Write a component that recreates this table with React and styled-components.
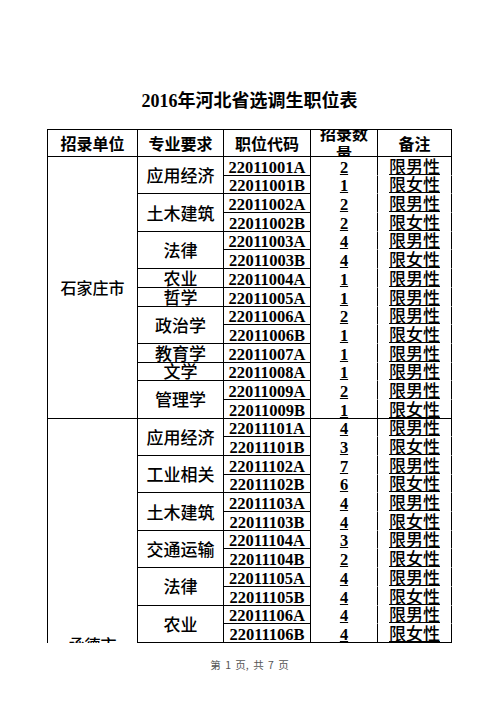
import React from 'react'
import styled, { createGlobalStyle } from 'styled-components'

const GlobalStyle = createGlobalStyle`
  html, body {
    margin: 0;
    padding: 0;
    background: #fff;
  }
  body {
    color: #000;
    font-family: "Noto Sans CJK SC", sans-serif;
  }
`

const ROW_H = 18.7

const Page = styled.div`
  width: 496px;
  height: 702px;
  box-sizing: border-box;
  padding: 90px 0 0 47px;
  display: flex;
  flex-direction: column;
  overflow: hidden;
`

const Title = styled.h1`
  margin: 0;
  width: 405px;
  text-align: center;
  font: 700 18px/22px "Liberation Serif", "Noto Sans CJK SC", serif;
`

const Sheet = styled.div`
  margin-top: 17px;
  display: grid;
  grid-template-columns: 90px 86px 87px 67px 74px;
  grid-template-rows: 27px repeat(26, ${ROW_H}px);
  width: max-content;
  border-top: 1px solid #000;
  border-left: 1px solid #000;
`

const Cell = styled.div`
  min-width: 0;
  display: flex;
  justify-content: center;
  overflow: hidden;
  border-right: 1px solid #000;
  border-bottom: 1px solid #000;
  white-space: nowrap;
`

const HeadCell = styled(Cell)`
  align-items: center;
  font: 700 16px/20px "Noto Sans CJK SC", sans-serif;
`

const QtyHead = styled(HeadCell)`
  padding: 0 4px;
  white-space: normal;
  text-align: center;
`

const CityCell = styled(Cell)`
  grid-column: 1;
  grid-row: ${p => p.$row} / span ${p => p.$span};
  align-items: ${p => (p.$open ? 'flex-start' : 'center')};
  border-bottom: ${p => (p.$open ? 'none' : '1px solid #000')};
  font: 500 16px/18px "Noto Sans CJK SC", sans-serif;
`

const CityName = styled.span`
  flex: none;
  display: flex;
  align-items: center;
  height: ${p => (p.$reach ? `${p.$reach}px` : 'auto')};
`

const MajorCell = styled(Cell)`
  grid-column: 2;
  grid-row: ${p => p.$row} / span ${p => p.$span};
  align-items: ${p => (p.$single ? 'flex-end' : 'center')};
  padding-bottom: ${p => (p.$single ? '1px' : '0')};
  font: 500 17px/16px "Noto Sans CJK SC", sans-serif;
`

const CodeCell = styled(Cell)`
  grid-column: 3;
  grid-row: ${p => p.$row};
  align-items: flex-end;
  font: 700 16.5px/14px "Liberation Serif", serif;
`

const CountCell = styled(Cell)`
  grid-column: 4;
  grid-row: ${p => p.$row};
  align-items: flex-end;
  border-bottom-color: ${p => (p.$edge ? '#000' : 'transparent')};
  font: 700 16.5px/14px "Liberation Serif", serif;
`

const NoteCell = styled(Cell)`
  grid-column: 5;
  grid-row: ${p => p.$row};
  align-items: flex-end;
  border-bottom-color: ${p => (p.$edge ? '#000' : 'transparent')};
  font: 500 17px/14px "Liberation Serif", "Noto Sans CJK SC", sans-serif;
`

const Marked = styled.span`
  text-decoration: underline;
  text-decoration-thickness: 1px;
  text-underline-offset: 1px;
`

const Footer = styled.div`
  width: 405px;
  margin-top: 15px;
  text-align: center;
  font: 400 10.5px/14px "Noto Sans CJK SC", sans-serif;
  color: #555;
  word-spacing: 2px;
`

// [专业, 编号前缀, A人数, B人数]
const groups = [
  {
    city: '石家庄市',
    majors: [
      ['应用经济', '22011001', 2, 1],
      ['土木建筑', '22011002', 2, 2],
      ['法律', '22011003', 4, 4],
      ['农业', '22011004', 1],
      ['哲学', '22011005', 1],
      ['政治学', '22011006', 2, 1],
      ['教育学', '22011007', 1],
      ['文学', '22011008', 1],
      ['管理学', '22011009', 2, 1]
    ]
  },
  {
    city: '承德市',
    open: true,
    majors: [
      ['应用经济', '22011101', 4, 3],
      ['工业相关', '22011102', 7, 6],
      ['土木建筑', '22011103', 4, 4],
      ['交通运输', '22011104', 3, 2],
      ['法律', '22011105', 4, 4],
      ['农业', '22011106', 4, 4]
    ]
  }
]

function buildCells () {
  const cells = []
  let row = 2
  groups.forEach((g, gi) => {
    const groupStart = row
    const span = g.majors.reduce((n, m) => n + (m.length > 3 ? 2 : 1), 0)
    cells.push(
      <CityCell key={'c' + gi} $row={groupStart} $span={span} $open={g.open}>
        <CityName $reach={g.open ? 450 : 0}>{g.city}</CityName>
      </CityCell>
    )
    g.majors.forEach(([name, code, a, b]) => {
      const lines = [[code + 'A', a, '限男性']]
      if (b !== undefined) lines.push([code + 'B', b, '限女性'])
      cells.push(
        <MajorCell key={code} $row={row} $span={lines.length} $single={lines.length === 1}>
          {name}
        </MajorCell>
      )
      lines.forEach(([id, count, note]) => {
        const edge = row === groupStart + span - 1
        cells.push(<CodeCell key={id} $row={row}>{id}</CodeCell>)
        cells.push(
          <CountCell key={id + 'n'} $row={row} $edge={edge}>
            <Marked>{count}</Marked>
          </CountCell>
        )
        cells.push(
          <NoteCell key={id + 's'} $row={row} $edge={edge}>
            <Marked>{note}</Marked>
          </NoteCell>
        )
        row++
      })
    })
  })
  return cells
}

export default function App () {
  return (
    <Page>
      <GlobalStyle />
      <Title>2016年河北省选调生职位表</Title>
      <Sheet>
        <HeadCell>招录单位</HeadCell>
        <HeadCell>专业要求</HeadCell>
        <HeadCell>职位代码</HeadCell>
        <QtyHead>招录数量</QtyHead>
        <HeadCell>备注</HeadCell>
        {buildCells()}
      </Sheet>
      <Footer>第 1 页, 共 7 页</Footer>
    </Page>
  )
}
